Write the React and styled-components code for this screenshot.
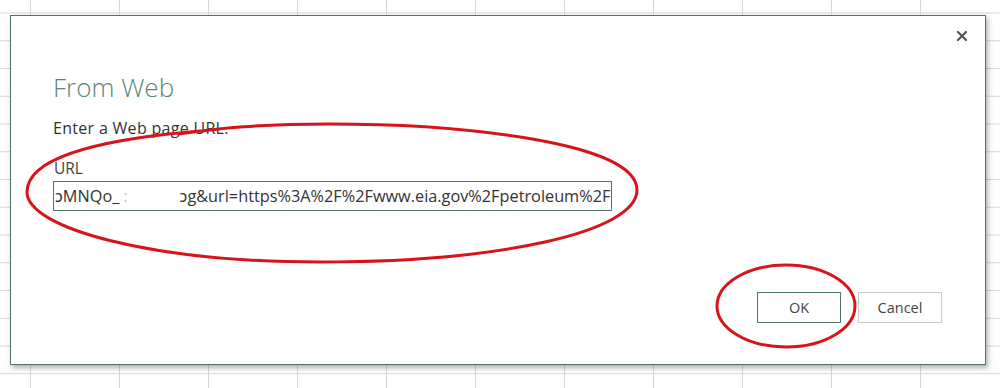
import React from "react";
import styled, { createGlobalStyle } from "styled-components";

const GlobalStyle = createGlobalStyle`
  html, body {
    margin: 0;
    padding: 0;
    background: #ffffff;
  }
  body {
    font-family: "Segoe UI", "Open Sans", "Noto Sans", sans-serif;
  }
`;

// spreadsheet sitting behind the dialog
const Sheet = styled.div`
  position: relative;
  width: 1000px;
  height: 388px;
  overflow: hidden;
  box-sizing: border-box;
  padding: 15px 14px 0 10px;
  background-color: #ffffff;
  background-image:
    linear-gradient(to right, #d6d6d6 1px, transparent 1px),
    linear-gradient(to bottom, #d6d6d6 1px, transparent 1px);
  background-size: 89px 27.75px;
  background-position: 30px 12.5px;
`;

const Dialog = styled.div`
  box-sizing: border-box;
  height: 350px;
  background: #ffffff;
  border: 1px solid #4f7768;
  box-shadow: 2px 3px 5px rgba(60, 60, 60, 0.4);
  display: flex;
  flex-direction: column;
  padding: 14px 17px 0 42px;
`;

const CloseRow = styled.div`
  display: flex;
  justify-content: flex-end;
`;

const CloseButton = styled.button`
  border: none;
  background: transparent;
  padding: 0;
  width: 12px;
  height: 12px;
  display: flex;
  align-items: center;
  justify-content: center;
  cursor: pointer;
`;

const Title = styled.h1`
  margin: 29px 0 0;
  font-size: 26px;
  font-weight: 300;
  line-height: 32px;
  color: #5a8778;
`;

const Prompt = styled.p`
  margin: 15px 0 0;
  font-size: 16px;
  letter-spacing: 0.3px;
  line-height: 20px;
  color: #333333;
`;

const FieldLabel = styled.label`
  display: block;
  margin: 20px 0 0 1px;
  font-size: 15.5px;
  line-height: 20px;
  color: #444444;
`;

const UrlBox = styled.div`
  box-sizing: border-box;
  width: 559px;
  height: 30px;
  margin-top: 3px;
  border: 1px solid #4f7768;
  display: flex;
  align-items: center;
  overflow: hidden;
  white-space: nowrap;
  font-size: 16.3px;
  color: #333333;
`;

const UrlPart = styled.span`
  flex: none;
  margin-left: ${(p) => p.$offset || 0}px;
  color: ${(p) => (p.$faint ? "#c8c8c8" : "inherit")};
`;

const ButtonRow = styled.div`
  display: flex;
  justify-content: flex-end;
  gap: 17px;
  margin-top: auto;
  margin-bottom: 41px;
  padding-right: 26px;
`;

const DialogButton = styled.button`
  box-sizing: border-box;
  width: 84px;
  height: 31px;
  background: #ffffff;
  border: 1px solid ${(p) => (p.$primary ? "#4f7768" : "#c9c9c9")};
  font-family: inherit;
  font-size: 14.5px;
  color: #444444;
  cursor: pointer;
`;

const Markup = styled.svg`
  position: absolute;
  left: 0;
  top: 0;
  pointer-events: none;
`;

function CloseIcon() {
  return (
    <svg width="10" height="10" viewBox="0 0 10 10">
      <path d="M1 1 L9 9 M9 1 L1 9" stroke="#555555" strokeWidth="2.2" strokeLinecap="square" />
    </svg>
  );
}

export default function App() {
  return (
    <>
      <GlobalStyle />
      <Sheet>
        <Dialog>
          <CloseRow>
            <CloseButton aria-label="Close">
              <CloseIcon />
            </CloseButton>
          </CloseRow>
          <Title>From Web</Title>
          <Prompt>Enter a Web page URL.</Prompt>
          <FieldLabel>URL</FieldLabel>
          <UrlBox>
            <UrlPart $offset={1}>ɔMNQo_</UrlPart>
            <UrlPart $offset={4} $faint>:</UrlPart>
            <UrlPart $offset={52}>ɔg&amp;url=https%3A%2F%2Fwww.eia.gov%2Fpetroleum%2F</UrlPart>
          </UrlBox>
          <ButtonRow>
            <DialogButton $primary>OK</DialogButton>
            <DialogButton>Cancel</DialogButton>
          </ButtonRow>
        </Dialog>
        <Markup width="1000" height="388" viewBox="0 0 1000 388">
          <path
            d="M178 134 C 220 128, 260 124, 330 124 C 460 124, 637 142, 637 190 C 637 232, 500 262, 320 262 C 150 262, 27 228, 27 192 C 27 160, 90 140, 200 131"
            fill="none"
            stroke="#d7141c"
            strokeWidth="3"
          />
          <ellipse cx="786" cy="306" rx="69" ry="41" fill="none" stroke="#d7141c" strokeWidth="3" />
        </Markup>
      </Sheet>
    </>
  );
}
